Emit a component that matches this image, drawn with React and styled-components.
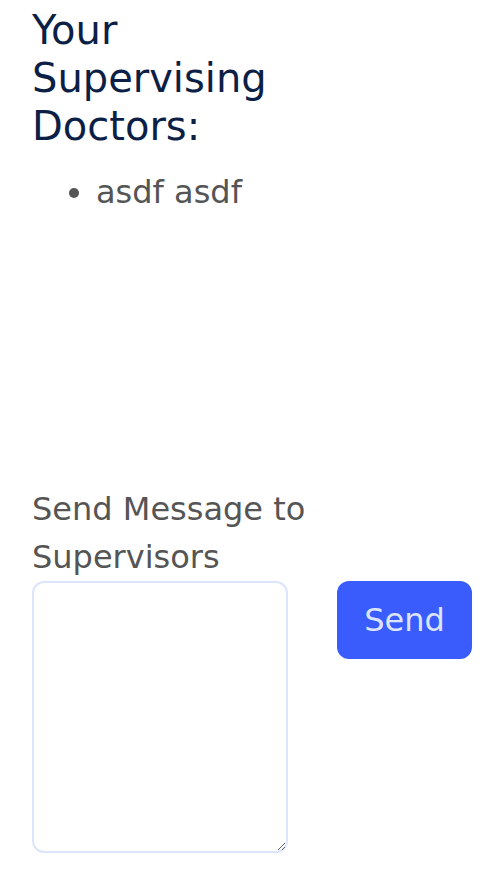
import React, { useState } from "react";
import styled, { createGlobalStyle } from "styled-components";

const GlobalStyle = createGlobalStyle`
  html, body {
    margin: 0;
    padding: 0;
    background: #ffffff;
    font-family: "DejaVu Sans", sans-serif;
  }
`;

const App = () => {
  const [message, setMessage] = useState("");
  const doctors = ["asdf asdf"];

  const submitHandler = (event) => {
    event.preventDefault();
    setMessage("");
  };

  return (
    <>
      <GlobalStyle />
      <StyledPage>
        <Heading>Your Supervising Doctors:</Heading>
        <DoctorList>
          {doctors.map((name) => (
            <li key={name}>{name}</li>
          ))}
        </DoctorList>
        <MessageForm onSubmit={submitHandler}>
          <label htmlFor="message">Send Message to Supervisors</label>
          <div className="form-row">
            <textarea
              id="message"
              name="message"
              value={message}
              onChange={(e) => setMessage(e.target.value)}
            />
            <SendButton type="submit">Send</SendButton>
          </div>
        </MessageForm>
      </StyledPage>
    </>
  );
};

const StyledPage = styled.div`
  padding: 6px 0 0 32px;
  display: flex;
  flex-direction: column;
`;

const Heading = styled.h2`
  width: 256px;
  margin: 0;
  font-size: 40px;
  line-height: 48px;
  font-weight: 400;
  color: rgb(12, 31, 70);
`;

const DoctorList = styled.ul`
  margin: 18px 0 269px;
  padding-left: 64px;
  font-size: 32px;
  line-height: 48px;
  color: rgb(85, 85, 85);
`;

const MessageForm = styled.form`
  display: flex;
  flex-direction: column;
  label {
    width: 300px;
    font-size: 32px;
    line-height: 48px;
    color: rgb(85, 85, 85);
  }
  .form-row {
    display: flex;
    align-items: flex-start;
    gap: 49px;
  }
  textarea {
    box-sizing: border-box;
    width: 256px;
    height: 272px;
    border: 2px solid rgb(221, 229, 252);
    border-radius: 12px;
    outline: none;
    font-family: inherit;
    font-size: 16px;
  }
`;

const SendButton = styled.button`
  box-sizing: border-box;
  width: 135px;
  height: 78px;
  border: none;
  border-radius: 12px;
  background: rgb(58, 92, 252);
  color: rgb(221, 228, 255);
  font-family: "DejaVu Sans", sans-serif;
  font-size: 32px;
  cursor: pointer;
`;

export default App;
